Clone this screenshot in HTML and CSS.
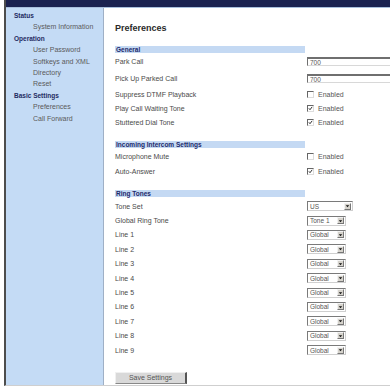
FILE: index.html
```html
<!DOCTYPE html>
<html>
<head>
<meta charset="utf-8">
<title>Preferences</title>
<link rel="stylesheet" href="styles.css">
</head>
<body>
<div class="frame">
  <div class="topbar"></div>
  <div class="main">
    <nav class="side">
      <div class="sec">Status</div>
      <div class="item">System Information</div>
      <div class="sec">Operation</div>
      <div class="item">User Password</div>
      <div class="item">Softkeys and XML</div>
      <div class="item">Directory</div>
      <div class="item">Reset</div>
      <div class="sec">Basic Settings</div>
      <div class="item">Preferences</div>
      <div class="item">Call Forward</div>
    </nav>
    <section class="content">
      <h1 class="title">Preferences</h1>

      <div class="head head-first">General</div>
      <div class="row tall"><span class="label">Park Call</span><span class="text">700</span></div>
      <div class="row tall"><span class="label">Pick Up Parked Call</span><span class="text">700</span></div>
      <div class="row"><span class="label">Suppress DTMF Playback</span><span class="check"><span class="box"></span>Enabled</span></div>
      <div class="row"><span class="label">Play Call Waiting Tone</span><span class="check"><span class="box"><svg viewBox="0 0 7 7"><path d="M1.2 3.2 L2.8 5.2 L5.8 1.2" /></svg></span>Enabled</span></div>
      <div class="row"><span class="label">Stuttered Dial Tone</span><span class="check"><span class="box"><svg viewBox="0 0 7 7"><path d="M1.2 3.2 L2.8 5.2 L5.8 1.2" /></svg></span>Enabled</span></div>

      <div class="head head-mid">Incoming Intercom Settings</div>
      <div class="row mid"><span class="label">Microphone Mute</span><span class="check"><span class="box"></span>Enabled</span></div>
      <div class="row mid"><span class="label">Auto-Answer</span><span class="check"><span class="box"><svg viewBox="0 0 7 7"><path d="M1.2 3.2 L2.8 5.2 L5.8 1.2" /></svg></span>Enabled</span></div>

      <div class="head head-ring">Ring Tones</div>
      <div class="row ring"><span class="label">Tone Set</span><span class="select wide"><span class="val">US</span><span class="arrow"><svg viewBox="0 0 6 6"><path d="M1 2 H5 L3 4.4 Z" /></svg></span></span></div>
      <div class="row ring"><span class="label">Global Ring Tone</span><span class="select"><span class="val">Tone 1</span><span class="arrow"><svg viewBox="0 0 6 6"><path d="M1 2 H5 L3 4.4 Z" /></svg></span></span></div>
      <div class="row ring"><span class="label">Line 1</span><span class="select"><span class="val">Global</span><span class="arrow"><svg viewBox="0 0 6 6"><path d="M1 2 H5 L3 4.4 Z" /></svg></span></span></div>
      <div class="row ring"><span class="label">Line 2</span><span class="select"><span class="val">Global</span><span class="arrow"><svg viewBox="0 0 6 6"><path d="M1 2 H5 L3 4.4 Z" /></svg></span></span></div>
      <div class="row ring"><span class="label">Line 3</span><span class="select"><span class="val">Global</span><span class="arrow"><svg viewBox="0 0 6 6"><path d="M1 2 H5 L3 4.4 Z" /></svg></span></span></div>
      <div class="row ring"><span class="label">Line 4</span><span class="select"><span class="val">Global</span><span class="arrow"><svg viewBox="0 0 6 6"><path d="M1 2 H5 L3 4.4 Z" /></svg></span></span></div>
      <div class="row ring"><span class="label">Line 5</span><span class="select"><span class="val">Global</span><span class="arrow"><svg viewBox="0 0 6 6"><path d="M1 2 H5 L3 4.4 Z" /></svg></span></span></div>
      <div class="row ring"><span class="label">Line 6</span><span class="select"><span class="val">Global</span><span class="arrow"><svg viewBox="0 0 6 6"><path d="M1 2 H5 L3 4.4 Z" /></svg></span></span></div>
      <div class="row ring"><span class="label">Line 7</span><span class="select"><span class="val">Global</span><span class="arrow"><svg viewBox="0 0 6 6"><path d="M1 2 H5 L3 4.4 Z" /></svg></span></span></div>
      <div class="row ring"><span class="label">Line 8</span><span class="select"><span class="val">Global</span><span class="arrow"><svg viewBox="0 0 6 6"><path d="M1 2 H5 L3 4.4 Z" /></svg></span></span></div>
      <div class="row ring"><span class="label">Line 9</span><span class="select"><span class="val">Global</span><span class="arrow"><svg viewBox="0 0 6 6"><path d="M1 2 H5 L3 4.4 Z" /></svg></span></span></div>

      <div class="actions"><span class="button">Save Settings</span></div>
    </section>
  </div>
</div>
</body>
</html>
```
FILE: styles.css
```css
* { box-sizing: border-box; }
html, body { margin: 0; padding: 0; background: #ffffff; }
body {
  font-family: "Liberation Sans", Arial, sans-serif;
  font-size: 7px;
  color: #4a4a4a;
  overflow: hidden;
}
.frame {
  margin-left: 4px;
  width: 386px;
  height: 386px;
  border-left: 2px solid #4d4d4d;
  border-bottom: 1px solid #cfcfcf;
  display: flex;
  flex-direction: column;
  overflow: hidden;
}
.topbar {
  height: 8px;
  flex: none;
  background: #1b2250;
  border-bottom: 1px solid #a9bfdc;
}
.main {
  flex: 1;
  display: flex;
  min-height: 0;
}
.side {
  width: 98px;
  flex: none;
  background: #c4dbf5;
  border-right: 1px solid #9fb0c6;
  padding: 2px 0 0 8px;
}
.side .sec, .side .item {
  height: 11.4px;
  line-height: 11.4px;
  white-space: nowrap;
}
.side .sec {
  font-weight: bold;
  color: #1f2b62;
  font-size: 6.5px;
}
.side .item {
  padding-left: 19px;
  color: #5a5a5a;
}
.content {
  flex: 1;
  padding-left: 11px;
  min-width: 0;
}
.title {
  margin: 0;
  padding-top: 14px;
  height: 26px;
  line-height: 12px;
  font-size: 9px;
  font-weight: bold;
  color: #2a2a2a;
}
.head {
  width: 190px;
  height: 7px;
  line-height: 7px;
  background: #c4d9f3;
  color: #1d2a6b;
  font-weight: bold;
  font-size: 6.5px;
  padding-left: 1px;
}
.head-first { margin-top: 12px; }
.head-mid { margin-top: 12px; margin-bottom: 1px; }
.head-ring { margin-top: 10.5px; margin-bottom: 2.5px; }
.row {
  display: flex;
  align-items: center;
  height: 14px;
  white-space: nowrap;
}
.row.tall { height: 17px; }
.row.mid { height: 15px; }
.row.ring { height: 14.4px; }
.label {
  width: 192px;
  flex: none;
  color: #4a4a4a;
}
.text {
  width: 90px;
  height: 9px;
  line-height: 7px;
  border-top: 2px solid #6f6f6f;
  border-left: 1px solid #6f6f6f;
  border-bottom: 1px solid #d8d8d8;
  padding-left: 2px;
  color: #555;
  font-size: 6.5px;
}
.check {
  display: flex;
  align-items: center;
  color: #555;
}
.box {
  width: 7px;
  height: 7px;
  margin-right: 4px;
  background: #fff;
  border-top: 1px solid #666;
  border-left: 1px solid #666;
  border-right: 1px solid #ddd;
  border-bottom: 1px solid #ddd;
  display: flex;
}
.box svg {
  width: 5px;
  height: 5px;
  fill: none;
  stroke: #333;
  stroke-width: 1.4;
}
.select {
  display: flex;
  align-items: center;
  justify-content: space-between;
  width: 39px;
  height: 10px;
  background: #fff;
  border-top: 1px solid #7a7a7a;
  border-left: 1px solid #7a7a7a;
  border-right: 1px solid #cfcfcf;
  border-bottom: 1px solid #cfcfcf;
  padding: 0 1px 0 2px;
  color: #555;
  font-size: 6.5px;
}
.select.wide { width: 46px; }
.arrow {
  width: 7px;
  height: 7px;
  background: #d6d3cc;
  border-top: 1px solid #f2f2f2;
  border-left: 1px solid #f2f2f2;
  border-right: 1px solid #777;
  border-bottom: 1px solid #777;
  display: flex;
  align-items: center;
  justify-content: center;
}
.arrow svg {
  width: 6px;
  height: 6px;
  fill: #111;
}
.actions {
  margin-top: 14.6px;
}
.button {
  display: inline-block;
  width: 72px;
  height: 12px;
  line-height: 10px;
  text-align: center;
  background: #d9d9d9;
  border-top: 1px solid #f0f0f0;
  border-left: 1px solid #f0f0f0;
  border-right: 2px solid #555;
  border-bottom: 1px solid #888;
  color: #555;
}
```
